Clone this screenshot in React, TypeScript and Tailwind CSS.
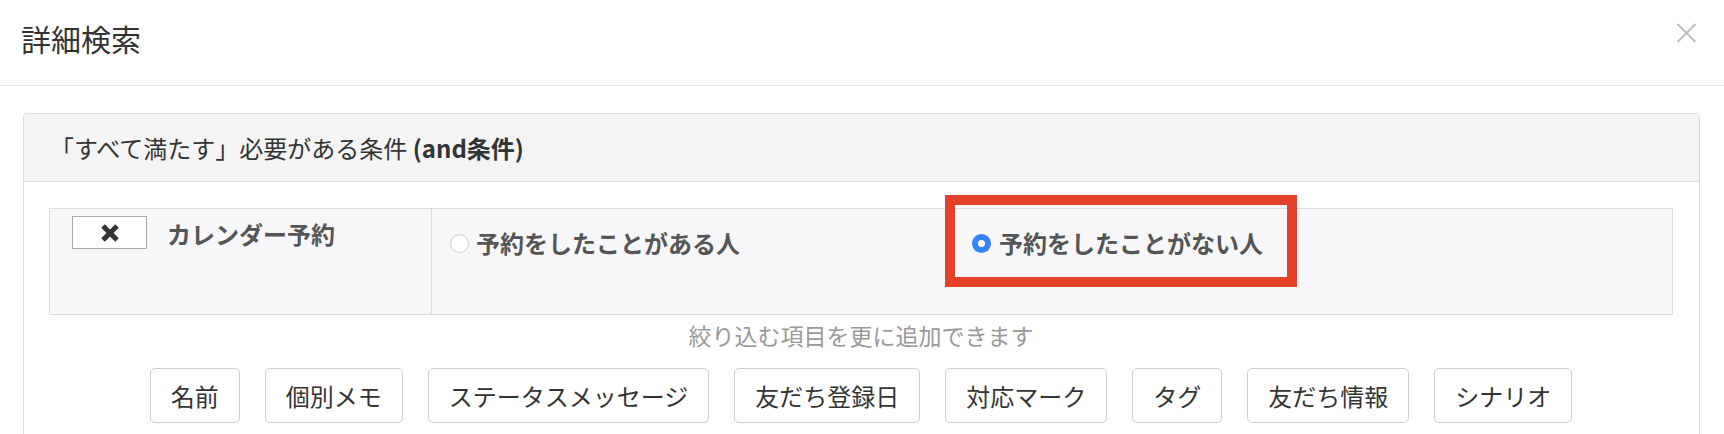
import { useState } from "react";

const addItems = [
  "名前",
  "個別メモ",
  "ステータスメッセージ",
  "友だち登録日",
  "対応マーク",
  "タグ",
  "友だち情報",
  "シナリオ",
];

const Radio = ({ checked }: { checked: boolean }) =>
  checked ? (
    <span className="flex h-[19px] w-[19px] shrink-0 items-center justify-center rounded-full bg-[#3583f6]">
      <span className="h-[7px] w-[7px] rounded-full bg-white" />
    </span>
  ) : (
    <span className="h-[19px] w-[19px] shrink-0 rounded-full border border-[#cfcfcf] bg-white shadow-[inset_0_1px_1px_rgba(0,0,0,0.06)]" />
  );

const App = () => {
  const [booked, setBooked] = useState<"yes" | "no">("no");

  return (
    <div className="min-h-screen bg-white font-['Noto_Sans_CJK_JP','Noto_Sans',sans-serif] text-[#333]">
      {/* modal header */}
      <div className="flex h-[86px] items-start justify-between border-b border-[#e3e3e3] pl-[21px] pr-[27px]">
        <h2 className="mt-[18px] text-[30px] leading-[40px] font-normal">詳細検索</h2>
        <button className="mt-[23px] h-[20px] w-[21px] text-[#bdbdbd]">
          <svg viewBox="0 0 21 20" className="h-[20px] w-[21px]">
            <path d="M1.5 1 L19.5 19 M19.5 1 L1.5 19" stroke="currentColor" strokeWidth="2" fill="none" />
          </svg>
        </button>
      </div>

      <div className="pl-[23px] pr-[24px] pt-[27px]">
        <div className="rounded-[4px] border border-[#dcdcdc]">
          <div className="flex h-[68px] items-center rounded-t-[4px] border-b border-[#dcdcdc] bg-[#f4f4f4] pl-[26px] text-[24px]">
            <span>
              「すべて満たす」必要がある条件 <b className="font-bold">(and条件)</b>
            </span>
          </div>

          <div className="pl-[25px] pr-[26px] pt-[26px] pb-[30px]">
            {/* condition row */}
            <div className="flex h-[107px] border border-[#dcdcdc] bg-[#f7f7f9]">
              <div className="flex w-[382px] items-start gap-[20px] border-r border-[#dcdcdc] pl-[22px] pt-[7px]">
                <button className="flex h-[33px] w-[75px] items-center justify-center border border-[#a9a9a9] bg-white">
                  <svg viewBox="0 0 20 20" className="h-[20px] w-[20px]">
                    <path d="M3 3 L17 17 M17 3 L3 17" stroke="#333" strokeWidth="5" fill="none" />
                  </svg>
                </button>
                <span className="pt-[1px] text-[24px] leading-[34px] font-bold text-[#555]">カレンダー予約</span>
              </div>
              <div className="relative flex flex-1 items-start pl-[18px] pt-[17px]">
                <label
                  className="flex w-[522px] cursor-pointer items-center gap-[7px]"
                  onClick={() => setBooked("yes")}
                >
                  <Radio checked={booked === "yes"} />
                  <span className="text-[24px] leading-[34px] font-bold text-[#555]">予約をしたことがある人</span>
                </label>
                <label
                  className="flex cursor-pointer items-center gap-[8px]"
                  onClick={() => setBooked("no")}
                >
                  <Radio checked={booked === "no"} />
                  <span className="text-[24px] leading-[34px] font-bold text-[#555]">予約をしたことがない人</span>
                </label>
                {/* annotation box */}
                <div className="pointer-events-none absolute left-[513px] top-[-14px] h-[92px] w-[352px] border-[10px] border-[#e5412a]" />
              </div>
            </div>

            <p className="mt-[5px] text-center text-[23px] leading-[30px] text-[#999]">
              絞り込む項目を更に追加できます
            </p>

            <div className="mt-[18px] flex justify-center gap-[25px]">
              {addItems.map((item) => (
                <button
                  key={item}
                  className="h-[55px] rounded-[5px] border border-[#cfcfcf] bg-white px-[20px] text-[24px] text-[#333]"
                >
                  {item}
                </button>
              ))}
            </div>
          </div>
        </div>
      </div>
    </div>
  );
};

export default App;
